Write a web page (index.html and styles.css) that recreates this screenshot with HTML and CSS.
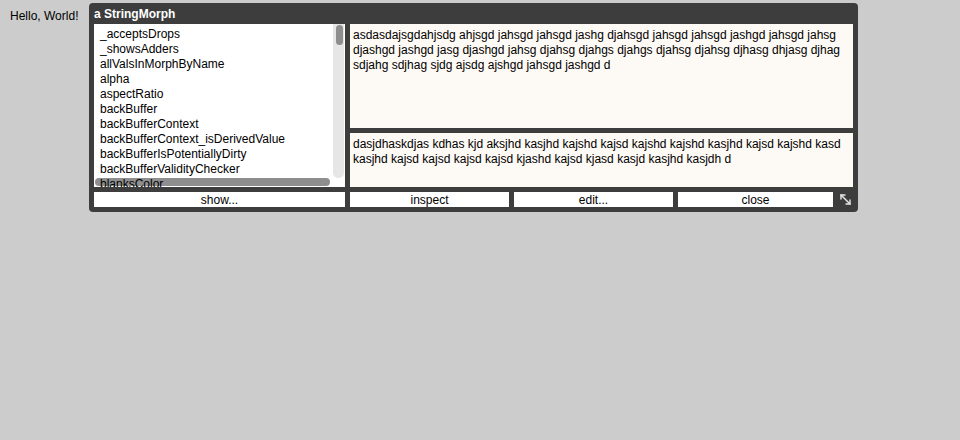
FILE: index.html
```html
<!DOCTYPE html>
<html>
<head>
<meta charset="utf-8">
<link rel="stylesheet" href="styles.css">
</head>
<body>
<div class="hello">Hello, World!</div>
<div class="window">
  <div class="title">a StringMorph</div>
  <div class="grid">
    <div class="list">
      <div class="items">
        <div>_acceptsDrops</div>
        <div>_showsAdders</div>
        <div>allValsInMorphByName</div>
        <div>alpha</div>
        <div>aspectRatio</div>
        <div>backBuffer</div>
        <div>backBufferContext</div>
        <div>backBufferContext_isDerivedValue</div>
        <div>backBufferIsPotentiallyDirty</div>
        <div>backBufferValidityChecker</div>
        <div>blanksColor</div>
        <div>bounds</div>
      </div>
      <div class="vtrack"><div class="vthumb"></div></div>
      <div class="hbar"></div>
    </div>
    <div class="pane pane-top">asdasdajsgdahjsdg ahjsgd jahsgd jahsgd jashg djahsgd jahsgd jahsgd jashgd jahsgd jahsg<br>djashgd jashgd jasg djashgd jahsg djahsg djahgs djahgs djahsg djahsg djhasg dhjasg djhag<br>sdjahg sdjhag sjdg ajsdg ajshgd jahsgd jashgd d</div>
    <div class="pane pane-bottom">dasjdhaskdjas kdhas kjd aksjhd kasjhd kajshd kajsd kajshd kajshd kasjhd kajsd kajshd kasd<br>kasjhd kajsd kajsd kajsd kajsd kjashd kajsd kjasd kasjd kasjhd kasjdh d</div>
    <div class="btn btn-show">show...</div>
    <div class="btnrow">
      <div class="btn">inspect</div>
      <div class="btn">edit...</div>
      <div class="btn">close</div>
      <div class="resize">
        <svg width="15" height="15" viewBox="0 0 15 15">
          <g stroke="#e8e8e8" stroke-width="1.4" fill="none" stroke-linecap="round">
            <line x1="3" y1="3" x2="12" y2="12"/>
            <polyline points="3,7 3,3 7,3"/>
            <polyline points="8,12 12,12 12,8"/>
          </g>
        </svg>
      </div>
    </div>
  </div>
</div>
</body>
</html>
```
FILE: styles.css
```css
html, body {
  margin: 0;
  padding: 0;
}
body {
  background: #cccccc;
  font-family: "Liberation Sans", Arial, sans-serif;
  font-size: 12px;
  color: #000;
  display: flex;
  align-items: flex-start;
  width: 960px;
  height: 440px;
}
.hello {
  margin: 9px 0 0 10px;
  line-height: 15px;
  width: 79px;
}
.window {
  margin-top: 3px;
  width: 769px;
  height: 209px;
  box-sizing: border-box;
  background: #3d3d3d;
  border-radius: 4px;
  padding: 0 5px 5px 5px;
}
.title {
  height: 21px;
  line-height: 23px;
  color: #fff;
  font-weight: bold;
  font-size: 12px;
}
.grid {
  display: grid;
  grid-template-columns: 251px 503px;
  grid-template-rows: 104px 54px 15px;
  column-gap: 5px;
  row-gap: 5px;
}
.list {
  grid-row: 1 / 3;
  grid-column: 1;
  background: #fff;
  position: relative;
  overflow: hidden;
}
.items {
  position: relative;
  z-index: 2;
  padding: 3px 0 0 6px;
  line-height: 15px;
}
.vtrack {
  position: absolute;
  right: 1px;
  top: 0;
  width: 11px;
  height: 154px;
  background: #e6e6e6;
  border-radius: 0 0 5px 5px;
  z-index: 1;
}
.vthumb {
  position: absolute;
  left: 3px;
  top: 1px;
  width: 7px;
  height: 20px;
  background: #8e8e8e;
  border-radius: 4px;
}
.hbar {
  position: absolute;
  left: 1px;
  top: 154px;
  width: 235px;
  height: 8px;
  background: #8e8e8e;
  border-radius: 4px;
  z-index: 1;
}
.pane {
  background: #fdf9f5;
  padding: 4px 0 0 3px;
  line-height: 15px;
  white-space: nowrap;
  overflow: hidden;
}
.pane-top {
  grid-row: 1;
  grid-column: 2;
}
.pane-bottom {
  grid-row: 2;
  grid-column: 2;
}
.btn {
  background: #fff;
  text-align: center;
  line-height: 16px;
  height: 15px;
}
.btn-show {
  grid-row: 3;
  grid-column: 1;
}
.btnrow {
  grid-row: 3;
  grid-column: 2;
  display: grid;
  grid-template-columns: 159px 159px 155px 15px;
  column-gap: 5px;
}
.resize {
  height: 15px;
  display: flex;
}
```
